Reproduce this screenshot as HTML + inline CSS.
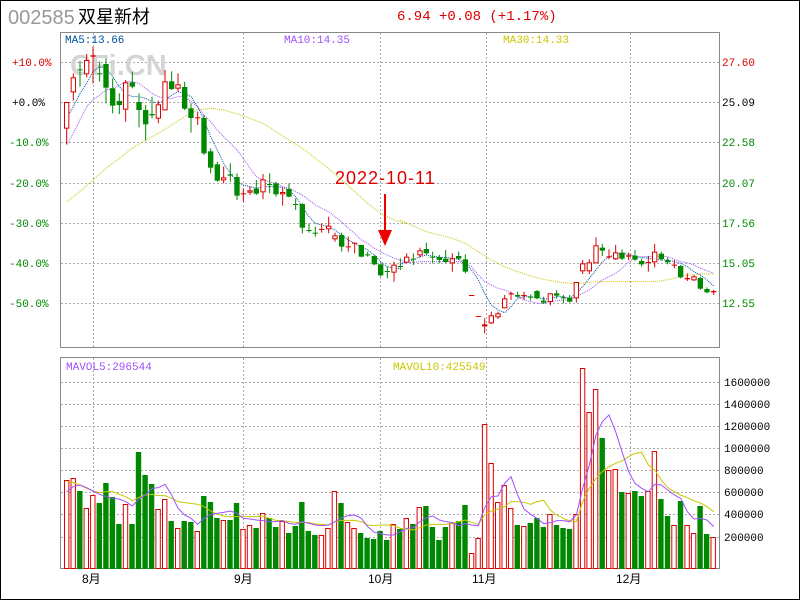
<!DOCTYPE html>
<html><head><meta charset="utf-8">
<style>
html,body{margin:0;padding:0;background:#fff;}
#w{position:relative;width:798px;height:598px;border:1px solid #000;overflow:hidden;}
svg{position:absolute;left:-1px;top:-1px;}
.m{font-family:"Liberation Mono","Noto Sans CJK SC",monospace;}
</style></head><body><div id="w">
<svg id="s" width="800" height="600" xmlns="http://www.w3.org/2000/svg">
<text x="8" y="24" style="font-family:'Liberation Sans',sans-serif;font-size:20px" fill="#999">002585</text>
<text x="78" y="23" style="font-family:'Liberation Sans','Noto Sans CJK SC',sans-serif;font-size:18px" fill="#000">双星新材</text>
<text x="397" y="20" class="m" font-size="14" fill="#d00">6.94 +0.08 (+1.17%)</text>
<g id="grid" stroke="#aaa" stroke-width="1" stroke-dasharray="2,2" fill="none"></g>
<rect x="60.5" y="32.5" width="659" height="315" fill="none" stroke="#888"/>
<rect x="60.5" y="357.5" width="659" height="211" fill="none" stroke="#888"/>
<text x="70" y="75" style="font-family:'Liberation Sans',sans-serif;font-weight:bold;font-size:29px" fill="#d4d4d4">CFi.CN</text>
<g font-size="11" class="m">
<text x="65" y="43" fill="#0050a0">MA5:13.66</text>
<text x="284" y="43" fill="#a050ff">MA10:14.35</text>
<text x="503" y="43" fill="#c8c800">MA30:14.33</text>
<text x="66" y="370" fill="#a050ff">MAVOL5:296544</text>
<text x="393" y="370" fill="#c8c800">MAVOL10:425549</text>
</g>
<g font-size="11" fill="#080" class="m">
<text x="12" y="66" fill="#d00">+10.0%</text>
<text x="12" y="106" fill="#000">+0.0%</text>
<text x="9" y="146">-10.0%</text>
<text x="9" y="187">-20.0%</text>
<text x="9" y="227">-30.0%</text>
<text x="9" y="267">-40.0%</text>
<text x="9" y="307">-50.0%</text>
<text x="722" y="66" fill="#d00">27.60</text>
<text x="722" y="106" fill="#000">25.09</text>
<text x="722" y="146">22.58</text>
<text x="722" y="187">20.07</text>
<text x="722" y="227">17.56</text>
<text x="722" y="267">15.05</text>
<text x="722" y="307">12.55</text>
</g>
<g font-size="11" fill="#000" class="m">
<text x="724" y="386">1600000</text>
<text x="724" y="408">1400000</text>
<text x="724" y="430">1200000</text>
<text x="724" y="452">1000000</text>
<text x="724" y="474">800000</text>
<text x="724" y="496">600000</text>
<text x="724" y="518">400000</text>
<text x="724" y="541">200000</text>
</g>
<g fill="#000" style="font-family:'Liberation Sans','Noto Sans CJK SC',sans-serif;font-size:12px">
<text x="82" y="583">8月</text>
<text x="234" y="583">9月</text>
<text x="368" y="583">10月</text>
<text x="472" y="583">11月</text>
<text x="616" y="583">12月</text>
</g>
<g id="vb"></g>
<g id="g3" transform="translate(55,40) scale(0.33333)"></g>
<g id="g2" transform="translate(400,200) scale(0.33333)"></g>
<g id="v4" transform="translate(55,355) scale(0.33333)"></g>
<g id="v5" transform="translate(400,355) scale(0.33333)"></g>
<text x="335" y="184" style="font-family:'Liberation Sans',sans-serif;font-size:18px;letter-spacing:1px" fill="#d00">2022-10-11</text>
<line x1="385" y1="194" x2="385" y2="236" stroke="#e00" stroke-width="2"/>
<polygon points="378,230 392,230 385,246" fill="#e00"/>
</svg></div>
<script>
(function(){
var NS="http://www.w3.org/2000/svg";
function el(p,t,a){var e=document.createElementNS(NS,t);for(var k in a)e.setAttribute(k,a[k]);p.appendChild(e);return e;}
var grid=document.getElementById('grid');
[93.5,243.5,380.5,486.5,630.5].forEach(function(x){el(grid,'line',{x1:x,y1:33,x2:x,y2:347});el(grid,'line',{x1:x,y1:358,x2:x,y2:568});});
[62.5,102.5,142.5,183.5,223.5,263.5,303.5].forEach(function(y){el(grid,'line',{x1:61,y1:y,x2:720,y2:y});});
[382.5,404.5,426.5,448.5,470.5,492.5,514.5,537.5].forEach(function(y){el(grid,'line',{x1:61,y1:y,x2:720,y2:y});});
var R="#dd0000",G="#008800";
function cand(g,x,c,bt,bb,wt,wb){
 var col=c=='r'?R:G;
 el(g,'line',{x1:x,y1:wt,x2:x,y2:wb,stroke:col,'stroke-width':3});
 if(bb-bt<5){el(g,'rect',{x:x-8,y:bt,width:16,height:Math.max(3,bb-bt),fill:col});}
 else if(c=='r'){el(g,'rect',{x:x-6.5,y:bt+1.5,width:13,height:bb-bt-3,fill:'#fff',stroke:col,'stroke-width':3});}
 else el(g,'rect',{x:x-8,y:bt,width:16,height:bb-bt,fill:col});
}
var C3=[[35,'r',186,266,186,312],[55,'r',112,157,100,182],[75,'g',88,91,62,140],[95,'r',60,103,42,112],[114,'r',46,50,20,130],[134,'g',100,103,65,125],[153,'g',72,143,55,190],[173,'g',145,197,115,220],[193,'g',183,195,160,222],[212,'r',127,209,120,245],[232,'g',127,140,95,145],[252,'g',186,210,160,262],[272,'g',210,253,195,302],[291,'g',222,226,170,235],[310,'r',193,236,182,250],[330,'r',124,211,90,211],[350,'g',124,147,94,150],[369,'r',133,146,100,155],[389,'g',141,206,125,210],[408,'g',205,234,190,278],[428,'r',232,235,215,255],[447,'g',234,340,225,345],[467,'g',334,383,325,400],[487,'g',373,422,365,425],[506,'r',412,421,380,430],[526,'g',403,407,370,425],[546,'g',411,467,400,480],[565,'r',460,463,445,485],[585,'r',451,458,440,465],[604,'g',446,461,420,465],[624,'r',418,457,402,478],[644,'g',432,435,400,460],[663,'g',430,463,425,470],[683,'r',456,463,443,497],[702,'g',447,470,430,472],[722,'g',492,495,475,510],[742,'g',492,563,490,580],[762,'g',570,573,550,578],[781,'g',578,581,560,590],[800,'r',567,570,550,578],[821,'r',557,568,530,580],[840,'r',586,598,578,605],[860,'g',585,620,578,635],[880,'r',619,622,590,635],[899,'r',608,611,608,640],[919,'g',615,650,615,652],[938,'g',643,646,635,650],[958,'g',648,673,646,676],[977,'g',673,706,670,710],[997,'g',693,696,680,715],[1017,'r',674,698,665,725],[1036,'g',678,681,655,690]];
var C2=[[20,'r',170,188,160,190],[40,'g',176,179,160,195],[60,'r',151,166,143,172],[79,'g',147,160,128,163],[98,'g',170,173,155,190],[118,'g',171,180,165,190],[137,'g',176,186,150,190],[157,'r',175,190,160,215],[176,'g',168,176,155,180],[196,'g',178,215,163,220],[215,'r',285,288,285,288],[235,'r',348,351,348,351],[254,'r',373,379,355,400],[274,'r',346,370,335,372],[294,'r',340,352,335,357],[314,'r',295,325,285,325],[333,'r',280,283,275,300],[353,'g',285,290,275,292],[372,'r',285,288,275,300],[392,'g',290,293,283,302],[411,'g',273,295,270,298],[431,'g',302,308,290,312],[451,'r',280,306,280,316],[470,'g',280,287,270,296],[490,'g',292,295,285,310],[509,'g',293,305,285,308],[529,'r',246,295,246,308],[548,'r',190,214,180,222],[568,'r',187,214,178,222],[588,'r',136,190,112,190],[607,'g',143,152,132,168],[627,'r',169,172,148,178],[647,'r',157,178,135,180],[666,'g',158,176,148,180],[686,'r',166,170,158,180],[705,'g',167,179,150,182],[725,'g',183,193,175,200],[745,'r',186,189,168,215],[764,'r',155,187,132,202],[784,'g',161,177,155,182],[803,'g',181,187,172,193],[823,'r',194,197,180,205],[842,'g',198,232,195,235],[862,'r',234,238,220,243],[882,'r',229,241,225,243],[901,'g',234,266,230,270],[921,'g',267,277,262,280],[941,'r',273,277,270,285]];
function line(g,pts,col,dash){el(g,'polyline',{points:pts.map(function(p){return p.join(',')}).join(' '),fill:'none',stroke:col,'stroke-width':3,'stroke-dasharray':dash||'none'});}
var g3=document.getElementById('g3'),g2=document.getElementById('g2');
line(g3,[[35,485],[75,455],[114,420],[153,385],[193,355],[232,325],[272,300],[310,280],[350,255],[389,230],[428,210],[467,205],[506,210],[546,222],[585,235],[624,250],[663,275],[702,300],[742,325],[781,355],[820,385],[860,420],[899,455],[938,490],[977,520],[1017,540],[1050,550]],'#c8c800','3,3');
line(g3,[[35,315],[55,280],[75,240],[95,200],[114,180],[134,165],[153,150],[173,145],[193,135],[212,125],[232,125],[252,130],[272,145],[291,160],[310,170],[330,175],[350,175],[369,170],[389,170],[408,185],[428,200],[447,225],[467,245],[487,270],[506,290],[526,310],[546,330],[565,355],[585,385],[604,410],[624,420],[644,425],[663,430],[683,440],[702,445],[722,455],[742,465],[762,480],[781,495],[800,505],[821,515],[840,530],[860,545],[880,565],[899,580],[919,600],[938,610],[958,625],[977,635],[997,645],[1017,655],[1036,660],[1050,665]],'#a050ff','3,3');
line(g3,[[35,235],[55,200],[75,160],[95,130],[114,95],[134,80],[153,85],[173,110],[193,140],[212,160],[232,170],[252,170],[272,175],[291,185],[310,190],[330,180],[350,165],[369,155],[389,160],[408,170],[428,200],[447,240],[467,290],[487,330],[506,370],[526,400],[546,425],[565,435],[585,440],[604,445],[624,440],[644,440],[663,440],[683,442],[702,450],[722,470],[742,500],[762,530],[781,550],[800,555],[821,560],[840,570],[860,585],[880,600],[899,610],[919,620],[938,630],[958,645],[977,665],[997,680],[1017,685],[1036,685]],'#0050a0','3,3');
line(g2,[[0,60],[40,78],[79,95],[118,105],[157,115],[196,130],[235,155],[274,180],[314,200],[353,215],[392,228],[431,238],[470,245],[509,250],[548,250],[588,245],[627,245],[666,245],[705,245],[745,245],[784,243],[823,235],[862,225],[901,222],[941,222]],'#c8c800','3,3');
line(g2,[[0,188],[20,187],[40,187],[60,185],[79,185],[98,185],[118,185],[137,185],[157,185],[176,185],[196,190],[215,200],[235,225],[254,245],[274,255],[294,265],[314,270],[333,278],[353,290],[372,300],[392,305],[411,310],[431,310],[451,305],[470,302],[490,300],[509,298],[529,290],[548,280],[568,270],[588,255],[607,240],[627,230],[647,220],[666,205],[686,185],[705,175],[725,170],[745,170],[764,170],[784,168],[803,170],[823,178],[842,185],[862,188],[882,195],[901,205],[921,212],[941,220]],'#a050ff','3,3');
line(g2,[[0,195],[20,185],[40,180],[60,170],[79,165],[98,168],[118,172],[137,172],[157,175],[176,178],[196,190],[215,210],[235,240],[254,280],[274,315],[294,330],[314,338],[333,320],[353,295],[372,290],[392,290],[411,292],[431,297],[451,297],[470,290],[490,290],[509,295],[529,280],[548,260],[568,235],[588,210],[607,185],[627,170],[647,165],[666,160],[686,163],[705,168],[725,172],[745,175],[764,177],[784,180],[803,180],[823,185],[842,190],[862,200],[882,215],[901,225],[921,240],[941,258]],'#0050a0','3,3');
C3.forEach(function(c){cand(g3,c[0],c[1],c[2],c[3],c[4],c[5]);});
C2.forEach(function(c){cand(g2,c[0],c[1],c[2],c[3],c[4],c[5]);});
var T=[480,478,491,508,495,503,483,497,524,504,524,452,475,484,509,499,521,528,521,522,531,496,502,518,520,520,503,529,525,528,513,518,527,521,533,526,502,531,535,535,528,491,503,522,528,533,538,539,531,540,524,529,518,524,507,506,527,540,527,523,521,505,553,538,424,463,502,485,508,525,526,523,518,527,514,525,528,529,514,368,412,389,438,470,469,492,493,491,496,491,451,499,516,525,501,525,533,506,534,537];
var cols=['r','r','g','r','r','g','g','g','g','r','g','g','g','g','r','r','g','r','g','g','r','g','g','g','r','g','g','r','r','g','r','g','g','r','g','g','g','g','g','r','r','r','g','r','r','g','g','g','g','g','r','g','r','g','r','g','g','g','g','r','g','g','r','r','r','r','r','r','r','g','r','g','g','g','r','g','g','g','r','r','r','r','g','r','r','g','r','g','g','r','r','g','g','r','g','r','r','g','g','r'];
var vb=document.getElementById('vb');
for(var i=0;i<100;i++){
 var x=66.7+i*6.53, ty=T[i];
 if(cols[i]=='g') el(vb,'rect',{x:(x-2.7).toFixed(1),y:ty,width:5.4,height:569-ty,fill:G});
 else el(vb,'rect',{x:(x-2.2).toFixed(1),y:ty+0.5,width:4.4,height:568-ty,fill:'#fff',stroke:R,'stroke-width':1});
}
function vl(g,pts,col){el(g,'polyline',{points:pts.map(function(p){return p.join(',')}).join(' '),fill:'none',stroke:col,'stroke-width':3});}
var v4=document.getElementById('v4'),v5=document.getElementById('v5');
vl(v4,[[35,380],[55,383],[75,390],[95,400],[114,408],[134,413],[153,410],[173,410],[193,418],[212,425],[232,437],[252,427],[272,420],[291,418],[310,422],[330,422],[350,430],[369,440],[389,443],[408,445],[428,448],[447,455],[467,468],[487,478],[506,483],[526,485],[546,485],[565,485],[585,485],[604,485],[624,483],[644,490],[663,496],[683,497],[702,500],[722,502],[742,502],[762,503],[781,507],[800,508],[821,510],[840,500],[860,496],[880,496],[899,496],[919,500],[938,510],[958,512],[977,510],[997,510],[1017,512],[1036,520],[1050,522]],'#c8c800');
vl(v4,[[35,411],[55,395],[75,390],[95,398],[114,408],[134,418],[153,425],[173,430],[193,432],[212,440],[232,453],[252,432],[272,420],[291,400],[310,398],[330,388],[350,420],[369,460],[389,480],[408,490],[428,508],[447,490],[467,478],[487,475],[506,472],[526,468],[546,475],[565,490],[585,492],[604,495],[624,497],[644,500],[663,500],[683,497],[702,505],[722,508],[742,500],[762,505],[781,510],[800,512],[821,510],[840,500],[860,488],[880,482],[899,480],[919,490],[938,515],[958,532],[977,536],[997,540],[1017,540],[1036,530],[1050,525]],'#a050ff');
vl(v5,[[0,520],[20,522],[40,525],[60,518],[79,510],[98,508],[118,508],[137,508],[157,505],[176,500],[196,495],[215,502],[235,508],[254,480],[274,468],[294,462],[314,455],[333,440],[353,440],[372,442],[392,448],[411,440],[431,436],[451,465],[470,480],[490,490],[509,498],[529,500],[548,440],[568,400],[588,370],[607,350],[627,335],[647,325],[666,318],[686,305],[705,295],[725,292],[745,330],[764,345],[784,375],[803,398],[823,410],[842,420],[862,428],[882,437],[901,444],[921,455],[941,470]],'#c8c800');
vl(v5,[[0,530],[20,520],[40,518],[60,500],[79,488],[98,483],[118,495],[137,500],[157,503],[176,512],[196,506],[215,510],[235,512],[254,458],[274,425],[294,423],[314,385],[333,365],[353,420],[372,462],[392,478],[411,490],[431,506],[451,503],[470,497],[490,497],[509,500],[529,480],[548,400],[568,330],[588,240],[607,200],[627,180],[647,230],[666,290],[686,350],[705,385],[725,400],[745,410],[764,388],[784,390],[803,405],[823,420],[842,430],[862,470],[882,492],[901,490],[921,495],[941,515]],'#a050ff');
})();
</script>
</body></html>
